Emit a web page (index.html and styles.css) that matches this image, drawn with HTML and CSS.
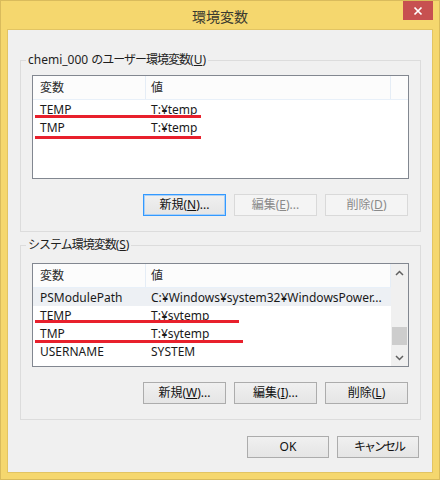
FILE: index.html
```html
<!DOCTYPE html>
<html lang="ja">
<head>
<meta charset="utf-8">
<title>環境変数</title>
<link rel="stylesheet" href="styles.css">
</head>
<body>
<div class="window">
  <div class="titlebar">
    <span class="title">環境変数</span>
    <div class="close"><svg width="10" height="10" viewBox="0 0 10 10"><path d="M1.5 1.5L8.5 8.5M8.5 1.5L1.5 8.5" stroke="#ffffff" stroke-width="1.7" fill="none"/></svg></div>
  </div>
  <div class="client">
    <section class="group group-user">
      <div class="legend">chemi_000 <span class="tight">のユーザー環境変数</span>(<u>U</u>)</div>
      <div class="list">
        <div class="list-body">
          <div class="hdr"><span class="c1">変数</span><span class="c2">値</span><span class="c3"></span></div>
          <div class="row"><span class="c1">TEMP</span><span class="c2">T:¥temp</span></div>
          <div class="row"><span class="c1">TMP</span><span class="c2">T:¥temp</span></div>
        </div>
        <span class="mark mu1"></span>
        <span class="mark mu2"></span>
      </div>
      <div class="btns">
        <div class="btn default">新規(<u>N</u>)...</div>
        <div class="btn disabled">編集(<u>E</u>)...</div>
        <div class="btn disabled">削除(<u>D</u>)</div>
      </div>
    </section>
    <section class="group group-sys">
      <div class="legend"><span class="tight">システム環境変数</span>(<u>S</u>)</div>
      <div class="list">
        <div class="list-body">
          <div class="hdr"><span class="c1">変数</span><span class="c2">値</span></div>
          <div class="row sel"><span class="c1">PSModulePath</span><span class="c2">C:¥Windows¥system32¥WindowsPower...</span></div>
          <div class="row"><span class="c1">TEMP</span><span class="c2">T:¥sytemp</span></div>
          <div class="row"><span class="c1">TMP</span><span class="c2">T:¥sytemp</span></div>
          <div class="row"><span class="c1">USERNAME</span><span class="c2">SYSTEM</span></div>
        </div>
        <div class="scrollbar">
          <div class="sb-btn"><svg width="9" height="6" viewBox="0 0 9 6"><path d="M1 5L4.5 1.5L8 5" stroke="#606060" stroke-width="1.5" fill="none"/></svg></div>
          <div class="sb-track"><div class="sb-thumb"></div></div>
          <div class="sb-btn"><svg width="9" height="6" viewBox="0 0 9 6"><path d="M1 1L4.5 4.5L8 1" stroke="#606060" stroke-width="1.5" fill="none"/></svg></div>
        </div>
        <span class="mark ms1"></span>
        <span class="mark ms2"></span>
      </div>
      <div class="btns">
        <div class="btn">新規(<u>W</u>)...</div>
        <div class="btn">編集(<u>I</u>)...</div>
        <div class="btn">削除(<u>L</u>)</div>
      </div>
    </section>
    <div class="dialog-btns">
      <div class="btn wide">OK</div>
      <div class="btn wide"><span class="tighter">キャンセル</span></div>
    </div>
  </div>
</div>
</body>
</html>
```

FILE: styles.css
```css
* { box-sizing: border-box; }
html, body { margin: 0; padding: 0; background: #ffffff; }
body {
  font-family: "Noto Sans", "Noto Sans CJK JP", sans-serif;
  font-size: 12px;
  color: #1a1a1a;
}
.window {
  width: 440px;
  height: 480px;
  background: #f5d76e;
  box-shadow: inset 0 0 0 1px #d9bb5c;
  display: flex;
  flex-direction: column;
}
.titlebar {
  height: 30px;
  position: relative;
  display: flex;
  align-items: center;
  justify-content: center;
  flex: none;
}
.title {
  font-family: "Noto Sans CJK JP", sans-serif;
  font-size: 14px;
  color: #3a3a30;
  padding-top: 1px;
}
.close {
  position: absolute;
  top: 1px;
  right: 7px;
  width: 30px;
  height: 19px;
  background: #c75050;
  display: flex;
  align-items: center;
  justify-content: center;
}
.client {
  flex: 1;
  margin: 0 8px 8px;
  background: #f0f0f0;
  box-shadow: 0 0 0 1px #e2c463;
  padding: 30px 11px 0 12px;
  display: flex;
  flex-direction: column;
}
.group {
  position: relative;
  border: 1px solid #dcdcdc;
  padding: 14px 11px 15px 11px;
}
.group-sys {
  margin-top: 13px;
  padding-top: 17px;
}
.legend {
  position: absolute;
  top: -9px;
  left: 5px;
  padding: 0 2px;
  background: #f0f0f0;
  line-height: 16px;
  color: #1e1e1e;
  white-space: nowrap;
}
.tight { letter-spacing: -1px; }
.tighter { letter-spacing: -2px; margin-right: -2px; }
.list {
  position: relative;
  height: 104px;
  border: 1px solid #828790;
  background: #ffffff;
  display: flex;
  overflow: hidden;
}
.list-body {
  flex: 1;
  overflow: hidden;
}
.hdr {
  height: 24px;
  display: flex;
  background: #fcfcfc;
  border-bottom: 1px solid #e8f0f9;
  line-height: 24px;
  color: #2a2a2a;
}
.hdr .c1 { border-right: 1px solid #e5edf6; }
.hdr .c2 { border-right: 1px solid #e5edf6; }
.hdr .c3 { flex: 1; }
.c1 {
  width: 113px;
  padding-left: 7px;
  flex: none;
  white-space: nowrap;
  overflow: hidden;
}
.c2 {
  width: 245px;
  padding-left: 5px;
  flex: none;
  white-space: nowrap;
  overflow: hidden;
}
.row {
  height: 18px;
  line-height: 20px;
  display: flex;
  overflow: hidden;
}
.row.sel { background: #edf0f4; }
.scrollbar {
  width: 17px;
  flex: none;
  background: #f0f0f0;
  display: flex;
  flex-direction: column;
}
.sb-btn {
  height: 17px;
  display: flex;
  align-items: center;
  justify-content: center;
}
.sb-track {
  flex: 1;
  padding: 46px 1px 0 1px;
}
.sb-thumb {
  height: 18px;
  background: #cdcdcd;
}
.mark {
  position: absolute;
  height: 3px;
  background: #e8202c;
  left: 2px;
}
.mu1 { top: 39px; width: 166px; }
.mu2 { top: 60px; width: 166px; }
.ms1 { top: 56px; width: 204px; }
.ms2 { top: 76px; width: 208px; }
.btns {
  margin-top: 15px;
  display: flex;
  justify-content: flex-end;
  gap: 8px;
  padding-right: 1px;
}
.btn {
  width: 83px;
  height: 22px;
  border: 1px solid #acacac;
  background: linear-gradient(#f0f0f0, #e5e5e5);
  text-align: center;
  line-height: 20px;
  color: #111111;
  white-space: nowrap;
}
.btn.default {
  border-color: #3399ff;
  box-shadow: inset 0 0 0 1px #a9d0f7;
}
.btn.disabled {
  border-color: #d9d9d9;
  background: #f4f4f4;
  color: #8a8a8a;
}
.btn.wide { width: 82px; }
.dialog-btns {
  margin-top: 16px;
  display: flex;
  justify-content: flex-end;
  gap: 8px;
  padding-right: 2px;
}
```
